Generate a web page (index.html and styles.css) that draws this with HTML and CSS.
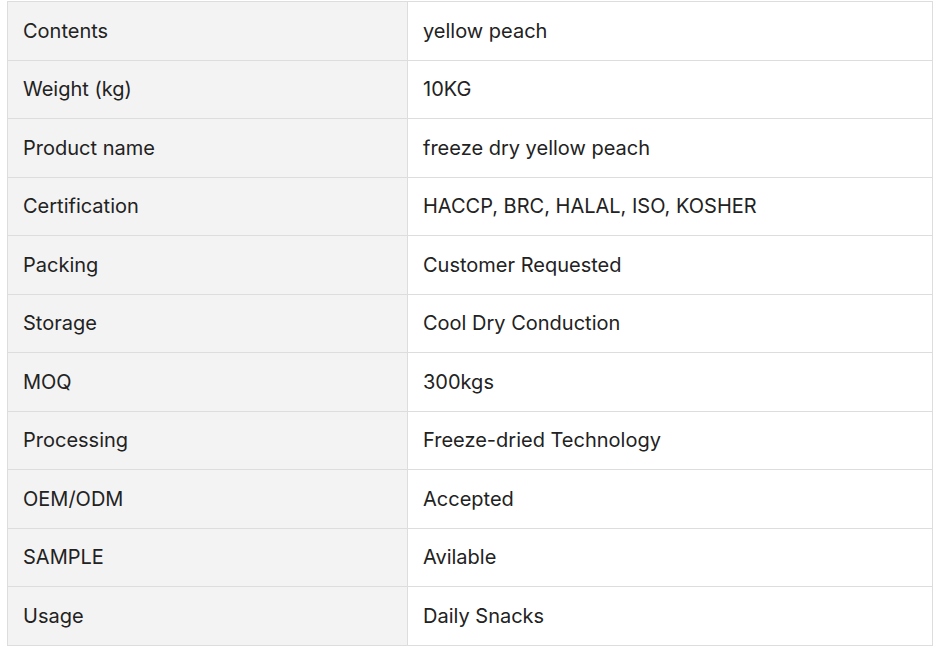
FILE: index.html
```html
<!DOCTYPE html>
<html>
<head>
<meta charset="utf-8">
<link rel="stylesheet" href="styles.css">
</head>
<body>
<table class="spec">
  <colgroup><col class="c-key"><col class="c-val"></colgroup>
  <tbody>
    <tr><td class="key">Contents</td><td class="val">yellow peach</td></tr>
    <tr><td class="key">Weight (kg)</td><td class="val">10KG</td></tr>
    <tr><td class="key">Product name</td><td class="val">freeze dry yellow peach</td></tr>
    <tr><td class="key">Certification</td><td class="val">HACCP, BRC, HALAL, ISO, KOSHER</td></tr>
    <tr><td class="key">Packing</td><td class="val">Customer Requested</td></tr>
    <tr><td class="key">Storage</td><td class="val">Cool Dry Conduction</td></tr>
    <tr><td class="key">MOQ</td><td class="val">300kgs</td></tr>
    <tr><td class="key">Processing</td><td class="val">Freeze-dried Technology</td></tr>
    <tr><td class="key">OEM/ODM</td><td class="val">Accepted</td></tr>
    <tr><td class="key">SAMPLE</td><td class="val">Avilable</td></tr>
    <tr><td class="key">Usage</td><td class="val">Daily Snacks</td></tr>
  </tbody>
</table>
</body>
</html>
```
FILE: styles.css
```css
html, body {
  margin: 0;
  padding: 0;
  background: #fff;
}
body {
  padding: 1px 0 0 7px;
  font-family: Inter, "Liberation Sans", sans-serif;
  font-size: 20px;
  color: #222;
}
.spec {
  border-collapse: collapse;
  width: 926px;
  table-layout: fixed;
}
.c-key { width: 400px; }
.spec td {
  border: 1px solid #ddd;
  height: 58.5px;
  padding: 0 15px;
  box-sizing: border-box;
  vertical-align: middle;
  line-height: 1.4;
}
.spec td.key {
  background: #f3f3f3;
}
.spec td.val {
  background: #fff;
}
```
